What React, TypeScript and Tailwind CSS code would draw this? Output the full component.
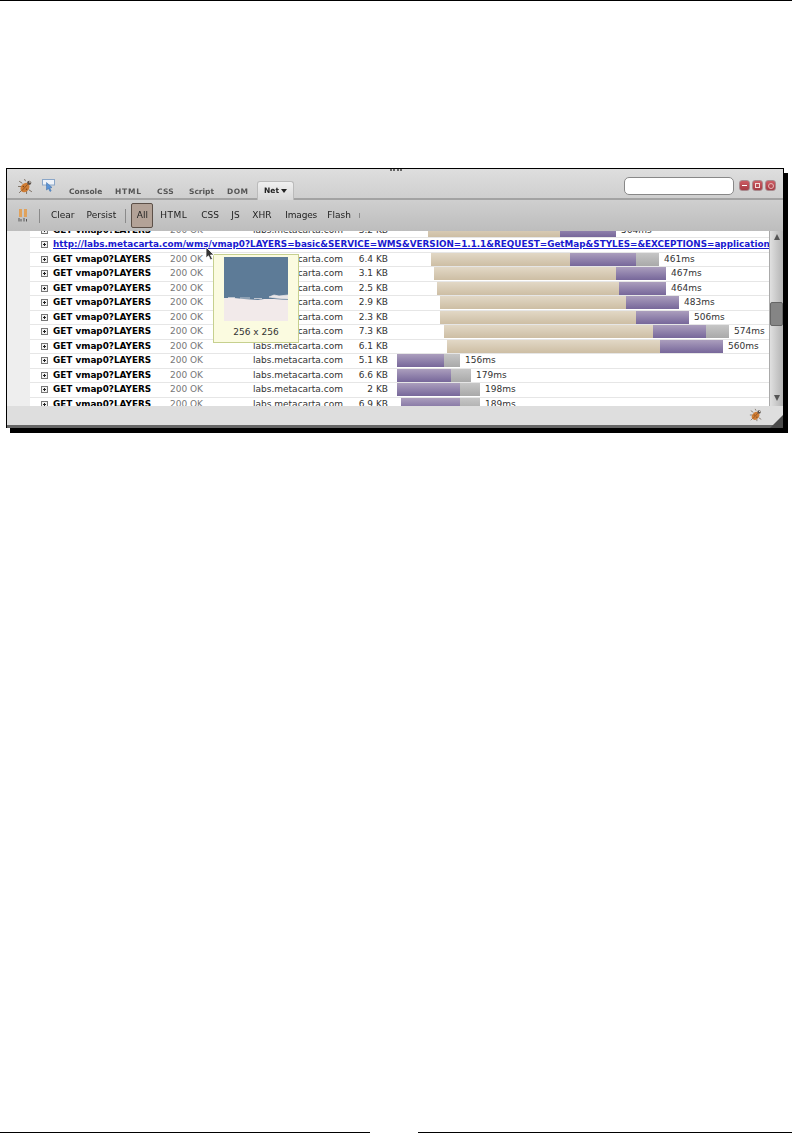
const rows = [
  { size: "3.2 KB", start: 30.5, tan: 132.5, purple: 56, gray: 0, ms: "564ms" },
  { url: true },
  { size: "6.4 KB", start: 34, tan: 139, purple: 66, gray: 23, ms: "461ms" },
  { size: "3.1 KB", start: 37, tan: 182, purple: 50, gray: 0, ms: "467ms" },
  { size: "2.5 KB", start: 40, tan: 182, purple: 47, gray: 0, ms: "464ms" },
  { size: "2.9 KB", start: 43, tan: 186, purple: 53, gray: 0, ms: "483ms" },
  { size: "2.3 KB", start: 43, tan: 196, purple: 53, gray: 0, ms: "506ms" },
  { size: "7.3 KB", start: 47, tan: 209, purple: 53, gray: 23, ms: "574ms" },
  { size: "6.1 KB", start: 50, tan: 213, purple: 63, gray: 0, ms: "560ms" },
  { size: "5.1 KB", start: 0, tan: 0, purple: 47, gray: 16, ms: "156ms" },
  { size: "6.6 KB", start: 0, tan: 0, purple: 54, gray: 20, ms: "179ms" },
  { size: "2 KB", start: 0, tan: 0, purple: 63, gray: 20, ms: "198ms" },
  { size: "6.9 KB", start: 4, tan: 0, purple: 59, gray: 20, ms: "189ms" },
];

const tabs = [
  { label: "Console", cls: "w-[31px]" },
  { label: "HTML", cls: "w-[28px] ml-[15px] tracking-[0.8px]" },
  { label: "CSS", cls: "w-[17px] ml-[14px] tracking-[0.3px]" },
  { label: "Script", cls: "w-[23px] ml-[15px]" },
  { label: "DOM", cls: "w-[22px] ml-[15px] tracking-[0.4px]" },
];

const filters = [
  { label: "HTML", cls: "w-[41px] tracking-[0.5px]" },
  { label: "CSS", cls: "w-[30px]" },
  { label: "JS", cls: "w-[21px]" },
  { label: "XHR", cls: "w-[33px]" },
  { label: "Images", cls: "w-[42px] tracking-[-0.2px]" },
  { label: "Flash", cls: "w-[32px]" },
];

function Bug({ size }: { size: number }) {
  return (
    <svg width={size} height={size} viewBox="0 0 16 16">
      <path d="M5 5 L2 3 M4 8 L1 8 M5 11 L2 14 M9 12 L9 15 M11 11 L14 13 M8 3 L7 1" stroke="#6d5f50" strokeWidth="0.8" fill="none" />
      <ellipse cx="7.5" cy="9" rx="3.8" ry="4.8" transform="rotate(40 7.5 9)" fill="#cf7d35" />
      <path d="M4.5 12 L10 6" stroke="#8a4f1e" strokeWidth="0.8" />
      <circle cx="6" cy="8" r="0.7" fill="#7a4518" />
      <circle cx="9" cy="10.5" r="0.7" fill="#7a4518" />
      <circle cx="11.5" cy="4.5" r="2" fill="#5a5048" />
      <circle cx="12.2" cy="3.8" r="0.7" fill="#ffffff" />
    </svg>
  );
}

function Expander() {
  return (
    <svg width="7" height="7" viewBox="0 0 7 7" className="shrink-0">
      <rect x="0.5" y="0.5" width="6" height="6" fill="#f2f2f2" stroke="#777" />
      <path d="M2 3.5 H5 M3.5 2 V5" stroke="#222" />
    </svg>
  );
}

function WindowButton({ children }: { children: React.ReactNode }) {
  return (
    <div className="w-[11px] h-[11px] rounded-[3px] bg-gradient-to-b from-[#cc5c64] to-[#a63a44] border border-[#a98a8e] flex items-center justify-center">
      {children}
    </div>
  );
}

export default function App() {
  return (
    <div className="w-[792px] h-[1142px] bg-white overflow-hidden flex flex-col font-['DejaVu_Sans',sans-serif]">
      <div className="h-px bg-black shrink-0" />

      <div className="mt-[167px] ml-[6px] w-[778px] h-[260px] relative border border-black border-b-0 shadow-[4px_5px_0_#000] bg-[#dcdcdc] flex flex-col shrink-0 blur-[0.35px]">
        {/* tab bar */}
        <div className="h-[31px] shrink-0 bg-gradient-to-b from-[#dedede] to-[#cfcfcf] border-b-2 border-[#a3a3a3] flex relative">
          <div className="absolute left-[383px] top-0 w-[12px] h-[3px] border-t-2 border-dotted border-[#666]" />
          <div className="ml-[10px] mt-[9px]">
            <Bug size={17} />
          </div>
          <svg width="14" height="14" viewBox="0 0 14 14" className="ml-[8px] mt-[10px]">
            <rect x="0.5" y="0.5" width="12" height="5.5" fill="#eef2f8" stroke="#8aa6c8" />
            <path d="M4.5 3.5 L4.5 11 L6.5 9.5 L8 12.5 L9.2 11.8 L7.8 9 L10 8.5 Z" fill="#5b93d6" stroke="#3a6ca8" strokeWidth="0.5" />
          </svg>
          <div className="flex ml-[13px] mt-[18px] text-[7.5px] leading-[10px] font-bold text-[#555] whitespace-nowrap">
            {tabs.map((t) => (
              <span key={t.label} className={t.cls}>
                {t.label}
              </span>
            ))}
          </div>
          <div className="ml-[8px] mt-[12px] w-[37px] h-[19px] rounded-t-[3px] bg-gradient-to-b from-[#f0f0f0] to-[#d8d8d8] border border-b-0 border-[#bbb] flex items-center justify-center gap-[2px] text-[7.5px] font-bold text-[#222]">
            Net
            <span className="w-0 h-0 border-x-[3px] border-x-transparent border-t-[4px] border-t-[#222]" />
          </div>
          <div className="ml-auto mr-[7px] mt-[8px] flex gap-[5px]">
            <div className="w-[110px] h-[18px] rounded-[5px] bg-white border border-[#888]" />
            <div className="flex gap-[2px] mt-[3px] h-[12px]">
              <WindowButton>
                <div className="w-[5px] h-px bg-white" />
              </WindowButton>
              <WindowButton>
                <div className="w-[5px] h-[5px] border border-[#f3dcdc]" />
              </WindowButton>
              <WindowButton>
                <div className="w-[6px] h-[6px] rounded-full border border-[#e8b8b8]" />
              </WindowButton>
            </div>
          </div>
        </div>

        {/* toolbar */}
        <div className="h-[31px] shrink-0 bg-gradient-to-b from-[#cfcfcf] to-[#bdbdbd] flex items-center text-[9px] text-[#222] relative">
          <svg width="10" height="13" viewBox="0 0 10 13" className="ml-[11px]">
            <rect x="1" y="0" width="3" height="8" fill="#e0a25c" />
            <rect x="6" y="0" width="3" height="8" fill="#e0a25c" />
            <path d="M1 9 V12.5 M3 10 V12.5 M6 9 V12.5 M8.5 10 V12.5" stroke="#555" />
          </svg>
          <div className="ml-[11px] w-px h-[14px] bg-[#8a8a8a]" />
          <span className="ml-[11px]">Clear</span>
          <span className="ml-[12px]">Persist</span>
          <div className="ml-[9px] w-px h-[14px] bg-[#8a8a8a]" />
          <div className="ml-[5px] w-[22px] h-[25px] rounded-[2px] bg-[#b3a297] border border-[#5c5048] flex items-center justify-center">
            All
          </div>
          <div className="ml-[7px] flex whitespace-nowrap">
            {filters.map((f) => (
              <span key={f.label} className={f.cls}>
                {f.label}
              </span>
            ))}
          </div>
          <div className="w-px h-[5px] bg-[#8a8a8a]" />
        </div>

        {/* net list */}
        <div className="h-[175px] shrink-0 flex bg-white">
          <div className="w-[762px] overflow-hidden">
            <div className="-mt-[7.5px]">
              {rows.map((r, i) => (
                <div key={i} className="h-[14.5px] flex items-center">
                  <div className="w-[23px] h-full shrink-0 bg-[#eeeeee]" />
                  <div className="flex-1 h-full flex items-center pl-[11px] border-b border-[#e6e6e6] text-[9px] whitespace-nowrap overflow-hidden">
                    <Expander />
                    {r.url ? (
                      <a className="ml-[5px] text-[8.82px] font-bold text-[#1a1ad0] underline">
                        http://labs.metacarta.com/wms/vmap0?LAYERS=basic&amp;SERVICE=WMS&amp;VERSION=1.1.1&amp;REQUEST=GetMap&amp;STYLES=&amp;EXCEPTIONS=application
                      </a>
                    ) : (
                      <>
                        <span className="ml-[5px] w-[117px] shrink-0 text-[8.85px] font-bold text-black">GET vmap0?LAYERS</span>
                        <span className="w-[83px] shrink-0 text-[#777]">200 OK</span>
                        <span className="w-[96px] shrink-0 text-[#333]">labs.metacarta.com</span>
                        <span className="w-[39px] shrink-0 text-right text-[#333]">{r.size}</span>
                        <div className="ml-[9px] flex items-center h-full" style={{ paddingLeft: r.start }}>
                          {r.tan! > 0 && (
                            <div className="h-[13px] bg-gradient-to-b from-[#e2d8c6] to-[#cdbea4]" style={{ width: r.tan }} />
                          )}
                          <div className="h-[13px] bg-gradient-to-b from-[#ab9ebd] to-[#77679a]" style={{ width: r.purple }} />
                          {r.gray! > 0 && (
                            <div className="h-[13px] bg-gradient-to-b from-[#c6c6c6] to-[#a9a9a9]" style={{ width: r.gray }} />
                          )}
                          <span className="ml-[5px] text-[#333]">{r.ms}</span>
                        </div>
                      </>
                    )}
                  </div>
                </div>
              ))}
            </div>
          </div>
          {/* scrollbar */}
          <div className="w-[14px] shrink-0 border-l border-[#aaa] bg-gradient-to-r from-[#e0e0e0] to-[#b4b4b4] flex flex-col items-center relative">
            <span className="mt-[3px] w-0 h-0 border-x-[3px] border-x-transparent border-b-[6px] border-b-[#555]" />
            <div className="mt-[62px] w-[13px] h-[24px] rounded-[2px] bg-[#858585] border border-[#666]" />
            <span className="mt-auto mb-[5px] w-0 h-0 border-x-[3px] border-x-transparent border-t-[6px] border-t-[#555]" />
          </div>
        </div>

        {/* status bar */}
        <div className="flex-1 bg-[#dedede] border-b-[3px] border-[#666] flex justify-end items-start relative">
          <div className="mr-[20px] mt-[2px]">
            <Bug size={14} />
          </div>
          <div className="absolute right-0 -bottom-[3px] w-0 h-0 border-l-[13px] border-l-transparent border-b-[13px] border-b-[#4a4a4a]" />
        </div>

        {/* image preview tooltip */}
        <div className="absolute left-[206px] top-[85px] w-[86px] h-[89px] bg-[#fbfbe0] border border-[#c6d08e] flex flex-col items-center text-[9px] text-[#333]">
          <svg width="64" height="64" viewBox="0 0 64 64" className="mt-[2px]">
            <rect width="64" height="64" fill="#f2eaea" />
            <path d="M0 0 H64 V43 L50 42 L40 42 L34 43 L20 42 L10 41 L0 41 Z" fill="#5d7b97" />
            <path d="M45 40 L50 38 L55 39 L64 38 V42 L52 41 Z M4 40.5 H11 M16 41 H26 M30 41.5 H38" fill="#e9e6e8" stroke="#e9e6e8" strokeWidth="0.7" />
          </svg>
          <span className="mt-[5px]">256 x 256</span>
        </div>

        {/* mouse cursor */}
        <svg width="12" height="16" viewBox="0 0 12 16" className="absolute left-[198px] top-[77px]">
          <path d="M1 1 L1 12 L3.5 9.8 L5.5 14 L7.5 13 L5.5 9 L9 9 Z" fill="#333" stroke="#fff" strokeWidth="0.8" />
        </svg>
      </div>

      <div className="mt-auto mb-[9px] flex justify-between shrink-0">
        <div className="w-[370px] h-px bg-black" />
        <div className="w-[374px] h-px bg-black" />
      </div>
    </div>
  );
}
